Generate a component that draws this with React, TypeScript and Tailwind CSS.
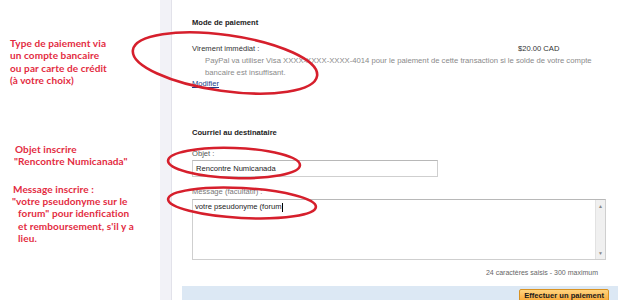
export default function App() {
  return (
    <div className="relative w-[625px] h-[300px] overflow-hidden bg-white flex">
      <div className="w-[160px] shrink-0 flex flex-col font-['Lato',sans-serif] font-bold text-[10px] tracking-[0.1px] leading-[12.3px] text-[#e32b3f]">
        <div className="mt-[37px] pl-[10px]">
          Type de paiement via<br />un compte bancaire<br />ou par carte de crédit<br />(à votre choix)
        </div>
        <div className="mt-[57px] pl-[15px]">
          Objet inscrire<br />
          <span className="-ml-[1px]">"Rencontre Numicanada"</span>
        </div>
        <div className="mt-[15px] pl-[13px]">
          Message inscrire :<br />
          <span className="-ml-[1px]">"votre pseudonyme sur le</span>
          <div className="pl-[5px]">
            forum" pour idenfication<br />et remboursement, s'il y a<br />lieu.
          </div>
        </div>
      </div>
      <div className="w-[12px] shrink-0 bg-[#f2f2f7] border-r border-[#e2e2ea]" />
      <div className="flex-1 flex flex-col pl-[10px] pr-[7px] font-['Liberation_Sans',Arial,sans-serif] text-[7.6px] leading-[12px] text-[#333]">
        <div className="pl-[10px] pt-[17px]">
          <div className="font-bold text-[#222]">Mode de paiement</div>
          <div className="mt-[14px] flex">
            <div className="flex-1">Virement immédiat :</div>
            <div className="w-[100px] text-[#333]">$20.00 CAD</div>
          </div>
          <div className="pl-[13px] text-[#8a8a8a] text-[7.7px] leading-[11.5px] pr-[16px]">
            PayPal va utiliser Visa XXXX-XXXX-XXXX-4014 pour le paiement de cette transaction si le solde de votre compte bancaire est insuffisant.
          </div>
          <div>
            <a className="text-[#1a3f8a] underline">Modifier</a>
          </div>
        </div>
        <div className="mt-[26px] h-[2px] bg-[#ebebeb]" />
        <div className="pl-[10px] pt-[11px]">
          <div className="font-bold text-[#222]">Courriel au destinataire</div>
          <div className="mt-[9px] text-[#555]">Objet :</div>
          <div className="w-[246px] h-[17px] border border-[#cfcfcf] border-t-[#b8b8b8] flex items-center pl-[3px] text-[#222]">
            Rencontre Numicanada
          </div>
          <div className="mt-[9px] text-[#777]">Message (facultatif) :</div>
          <div className="mt-[1px] w-[414px] h-[61px] border border-[#cfcfcf] border-t-[#b8b8b8] flex">
            <div className="flex-1 pl-[2px] pt-[1px] text-[#222]">
              votre pseudonyme (forum<span className="inline-block w-[1px] h-[9px] bg-black align-middle" />
            </div>
            <div className="w-[10px] bg-[#f0f0f0] border-l border-[#e2e2e2] flex flex-col justify-between items-center py-[3px] text-[5px] leading-[6px] text-[#888]">
              <span>▲</span>
              <span>▼</span>
            </div>
          </div>
          <div className="w-[406px] text-right mt-[7px] text-[7px] text-[#666]">24 caractères saisis - 300 maximum</div>
        </div>
        <div className="mt-[7px] flex-1 bg-[#dce8f4] flex justify-end items-start pr-[9px] pt-[3px]">
          <div className="h-[14px] px-[4px] bg-gradient-to-b from-[#ffd47e] to-[#f8a528] border border-[#d99222] rounded-[2px] font-bold text-[#1a1a1a] flex items-center">
            Effectuer un paiement
          </div>
        </div>
      </div>
      <svg className="absolute inset-0 pointer-events-none" width="625" height="300">
        <ellipse cx="225" cy="63" rx="93" ry="28" transform="rotate(8 225 63)" fill="none" stroke="#d61f2c" strokeWidth="2.6" />
        <ellipse cx="234" cy="163" rx="66" ry="15" transform="rotate(2 234 163)" fill="none" stroke="#d61f2c" strokeWidth="2.6" />
        <ellipse cx="242" cy="203" rx="74" ry="15" transform="rotate(3 242 203)" fill="none" stroke="#d61f2c" strokeWidth="2.6" />
      </svg>
    </div>
  );
}
